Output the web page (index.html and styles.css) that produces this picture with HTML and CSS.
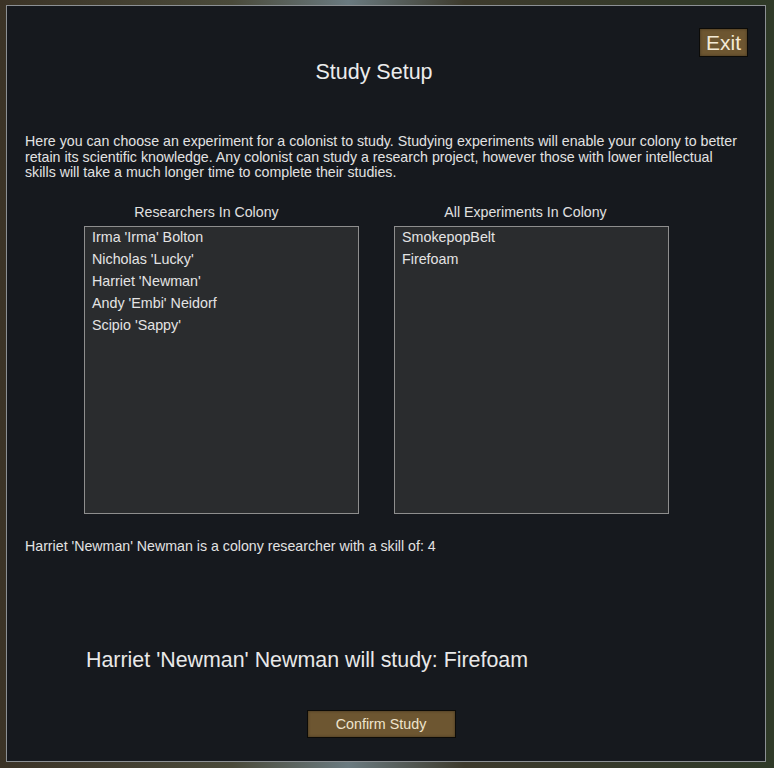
FILE: index.html
```html
<!DOCTYPE html>
<html lang="en">
<head>
  <meta charset="UTF-8">
  <title>Study Setup</title>
  <link rel="stylesheet" href="styles.css">
</head>
<body>
  <div class="window">
    <div class="top">
      <button class="exit">Exit</button>
    </div>
    <h1>Study Setup</h1>

    <p class="intro">Here you can choose an experiment for a colonist to study. Studying experiments will enable your colony to better retain its scientific knowledge. Any colonist can study a research project, however those with lower intellectual<br>skills will take a much longer time to complete their studies.</p>

    <div class="lists">
      <div class="column researchers">
        <h2>Researchers In Colony</h2>
        <ul class="listbox">
          <li>Irma 'Irma' Bolton</li>
          <li>Nicholas 'Lucky'</li>
          <li>Harriet 'Newman'</li>
          <li>Andy 'Embi' Neidorf</li>
          <li>Scipio 'Sappy'</li>
        </ul>
      </div>
      <div class="column experiments">
        <h2>All Experiments In Colony</h2>
        <ul class="listbox">
          <li>SmokepopBelt</li>
          <li>Firefoam</li>
        </ul>
      </div>
    </div>

    <p class="skill">Harriet 'Newman' Newman is a colony researcher with a skill of: 4</p>

    <p class="summary">Harriet 'Newman' Newman will study: Firefoam</p>

    <div class="actions">
      <button class="confirm">Confirm Study</button>
    </div>
  </div>
</body>
</html>
```

FILE: styles.css
```css
body {
  margin: 0;
  height: 768px;
  overflow: hidden;
  font-family: 'Liberation Sans', Arial, sans-serif;
  background: linear-gradient(90deg, #3b3326 0%, #4a4a3a 30%, #6a7a80 45%, #3d3a2c 60%, #2f3a28 100%);
  color: #e6e6e6;
}
.window {
  box-sizing: border-box;
  margin: 5px 8px 0 6px;
  height: 757px;
  background: #16191e;
  border: 1px solid #8c9094;
  padding: 0 18px 0 18px;
  display: flex;
  flex-direction: column;
}
.top {
  display: flex;
  justify-content: flex-end;
  padding-top: 22px;
  margin-right: -1px;
}
button {
  font-family: 'Liberation Sans', Arial, sans-serif;
  cursor: pointer;
}
.exit {
  height: 29px;
  padding: 0 6px;
  font-size: 21px;
  color: #f3ead6;
  background: #6d5631;
  border: 1px solid #0c0b08;
  box-shadow: inset 0 0 3px rgba(0,0,0,0.4);
}
h1 {
  margin: 1px 0 0;
  text-align: center;
  font-size: 21.5px;
  font-weight: normal;
  line-height: 28px;
  color: #ececec;
  padding-right: 24px;
}
.intro {
  margin: 48px -10px 0 0;
  font-size: 14.2px;
  line-height: 15.5px;
  color: #e2e2e2;
}
.lists {
  display: flex;
  gap: 35px;
  margin: 23px 0 0 59px;
}
.column { width: 275px; }
h2 {
  margin: 0 0 6px;
  text-align: center;
  font-size: 14.2px;
  font-weight: normal;
  line-height: 16px;
  color: #e0e0e0;
}
.researchers h2 { padding-right: 30px; }
.experiments h2 { padding-right: 12px; }
.listbox {
  list-style: none;
  margin: 0;
  padding: 0 7px;
  height: 286px;
  background: #2a2c2e;
  border: 1px solid #8e8e8e;
}
.listbox li {
  font-size: 14.3px;
  line-height: 22px;
  color: #e4e4e4;
}
.listbox li:first-child { margin-top: -1px; }
.skill {
  margin: 24px 0 0;
  font-size: 14.2px;
  line-height: 16px;
  color: #e2e2e2;
}
.summary {
  margin: 94px 0 0 61px;
  font-size: 21.4px;
  line-height: 24px;
  color: #e8e8e8;
}
.actions {
  display: flex;
  justify-content: center;
  margin-top: 38px;
  padding-right: 10px;
}
.confirm {
  width: 149px;
  height: 28px;
  font-size: 14.3px;
  color: #efe4cc;
  background: #6d5631;
  border: 1px solid #0c0b08;
  box-shadow: inset 0 0 3px rgba(0,0,0,0.4);
}
```
